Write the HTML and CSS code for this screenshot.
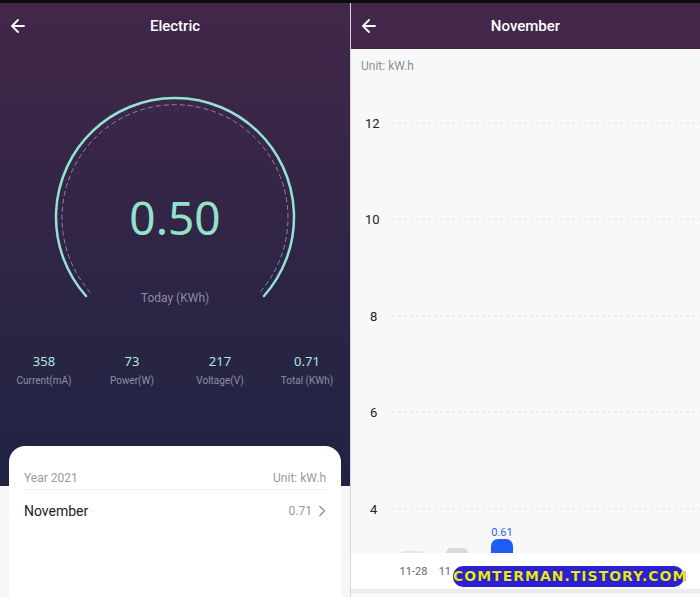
FILE: index.html
```html
<!DOCTYPE html>
<html lang="en">
<head>
    <meta charset="UTF-8">
    <meta name="viewport" content="width=device-width, initial-scale=1.0">
    <title>Electric</title>
    <link rel="stylesheet" href="styles.css">
</head>
<body>
    <!-- 顶部黑条 -->
    <div class="topbar"></div>

    <div class="screens">
        <!-- 左侧：用电概览 -->
        <div class="panel left">
            <div class="header">
                <svg class="back" width="16" height="14" viewBox="0 0 16 14">
                    <path d="M14 7 H2 M8 1 L2 7 L8 13" fill="none" stroke="#fff" stroke-width="1.8" stroke-linecap="round" stroke-linejoin="round"/>
                </svg>
                <h3>Electric</h3>
            </div>

            <svg class="gauge" width="350" height="270" viewBox="0 0 350 270">
                <path d="M 90.5 243.7 A 113 113 0 1 1 259.5 243.7" fill="none" stroke="#8b86a6" stroke-width="1" stroke-dasharray="5 3"/>
                <path d="M 86 247 A 119 119 0 1 1 264 247" fill="none" stroke="#93e3d3" stroke-width="2.5" stroke-linecap="round"/>
                <text class="big" x="175" y="186" text-anchor="middle">0.50</text>
                <text class="today" x="175" y="253" text-anchor="middle">Today (KWh)</text>
            </svg>

            <div class="stats">
                <div class="stat"><b>358</b><span>Current(mA)</span></div>
                <div class="stat"><b>73</b><span>Power(W)</span></div>
                <div class="stat"><b>217</b><span>Voltage(V)</span></div>
                <div class="stat"><b>0.71</b><span>Total (KWh)</span></div>
            </div>

            <div class="card">
                <div class="card-head">
                    <span>Year 2021</span>
                    <span>Unit: kW.h</span>
                </div>
                <div class="month">
                    <span>November</span>
                    <span class="val">0.71
                        <svg width="8" height="12" viewBox="0 0 8 12"><path d="M1.5 1 L6.5 6 L1.5 11" fill="none" stroke="#888" stroke-width="1.2"/></svg>
                    </span>
                </div>
            </div>
        </div>

        <!-- 右侧：月度图表 -->
        <div class="panel right">
            <div class="header">
                <svg class="back" width="16" height="14" viewBox="0 0 16 14">
                    <path d="M14 7 H2 M8 1 L2 7 L8 13" fill="none" stroke="#fff" stroke-width="1.8" stroke-linecap="round" stroke-linejoin="round"/>
                </svg>
                <h3>November</h3>
            </div>

            <div class="unit">Unit: kW.h</div>

            <svg class="chart" width="349" height="468" viewBox="0 0 349 468">
                <g class="grid">
                    <line x1="41" y1="38" x2="349" y2="38"/>
                    <line x1="41" y1="134" x2="349" y2="134"/>
                    <line x1="41" y1="231" x2="349" y2="231"/>
                    <line x1="41" y1="327" x2="349" y2="327"/>
                    <line x1="41" y1="424" x2="349" y2="424"/>
                </g>
                <g class="ylab">
                    <text x="14" y="43">12</text>
                    <text x="14" y="139">10</text>
                    <text x="19" y="236">8</text>
                    <text x="19" y="332">6</text>
                    <text x="19" y="429">4</text>
                </g>
                <rect x="50" y="466" width="23" height="6" rx="3" fill="#e6e6e6"/>
                <rect x="95" y="463" width="22" height="10" rx="5" fill="#dadada"/>
                <rect x="140" y="454" width="22" height="20" rx="7" fill="#1f5ef5"/>
                <text class="blue" x="151" y="451" text-anchor="middle">0.61</text>
            </svg>

            <div class="xaxis">
                <span>11-28</span>
                <span>11</span>
            </div>
            <div class="watermark">COMTERMAN.TISTORY.COM</div>
        </div>
    </div>
</body>
</html>
```

FILE: styles.css
```css
* {
    margin: 0;
    padding: 0;
    box-sizing: border-box;
}

body {
    width: 700px;
    height: 597px;
    overflow: hidden;
    background-color: #d9d4dc;
    font-family: Roboto, "Noto Sans", sans-serif;
}

.topbar {
    height: 3px;
    background-color: #0d0d0d;
}

.screens {
    display: flex;
    gap: 1px;
    height: 594px;
}

.panel {
    position: relative;
    height: 100%;
    overflow: hidden;
}

.left {
    width: 350px;
    background: linear-gradient(to bottom, #42274a 0px, #1f2342 483px, #f7f7f7 483px);
}

.right {
    width: 349px;
    background-color: #f8f8f8;
}

/* 标题栏 */
.header {
    height: 46px;
    display: flex;
    align-items: center;
    justify-content: center;
    position: relative;
    background-color: #42274a;
}

.left .header {
    background-color: transparent;
}

.header h3 {
    color: #fff;
    font-size: 15px;
    font-weight: 500;
}

.header .back {
    position: absolute;
    left: 10px;
    top: 16px;
}

.gauge {
    display: block;
}

.gauge .big {
    font-family: "Noto Sans", sans-serif;
    font-size: 46px;
    fill: #92e2cc;
}

.gauge .today {
    font-size: 12px;
    fill: #8d8b9f;
}

.stats {
    display: grid;
    grid-template-columns: 88px 88px 88px 86px;
    margin-top: 33px;
}

.stat {
    display: flex;
    flex-direction: column;
    align-items: center;
}

.stat b {
    font-family: "Noto Sans", sans-serif;
    font-weight: 400;
    font-size: 13px;
    line-height: 18px;
    color: #b4e7dd;
}

.stat span {
    font-size: 10px;
    line-height: 18px;
    margin-top: 2px;
    color: #8b8fa4;
}

/* 底部卡片 */
.card {
    margin: 56px 9px 0;
    height: 160px;
    background-color: #fff;
    border-radius: 16px 16px 0 0;
    padding: 0 15px;
}

.card-head {
    height: 44px;
    display: flex;
    justify-content: space-between;
    align-items: flex-end;
    padding-bottom: 4px;
    border-bottom: 1px solid #f0f0f0;
    font-size: 12px;
    color: #9a9a9a;
}

.month {
    height: 42px;
    display: flex;
    justify-content: space-between;
    align-items: center;
    font-size: 14px;
    color: #222;
}

.month .val {
    display: flex;
    align-items: center;
    gap: 6px;
    font-size: 12px;
    color: #999;
}

/* 右侧图表 */
.unit {
    height: 36px;
    padding: 10px 0 0 10px;
    font-size: 12px;
    color: #8e8e8e;
}

.chart {
    display: block;
}

.chart .grid line {
    stroke: #e3e3e3;
    stroke-width: 1;
    stroke-dasharray: 3 3;
}

.chart .ylab text {
    font-size: 13px;
    fill: #222;
}

.chart .blue {
    font-size: 11px;
    fill: #2b62f0;
}

.xaxis {
    height: 40px;
    background-color: #fff;
    border-bottom: 4px solid #ececec;
    display: flex;
    align-items: center;
    padding-left: 40px;
}

.xaxis span {
    width: 45px;
    text-align: center;
    font-size: 11px;
    color: #666;
}

.xaxis span + span {
    width: 15px;
    text-align: right;
}

.watermark {
    position: absolute;
    left: 102px;
    top: 563px;
    width: 231px;
    height: 21px;
    line-height: 21px;
    background-color: #2c20d6;
    border-radius: 10px;
    text-align: center;
    font-family: "DejaVu Sans", sans-serif;
    font-weight: bold;
    font-size: 14px;
    letter-spacing: 1px;
    color: #e6e62a;
    text-shadow: 0 0 1px #000;
}
```
